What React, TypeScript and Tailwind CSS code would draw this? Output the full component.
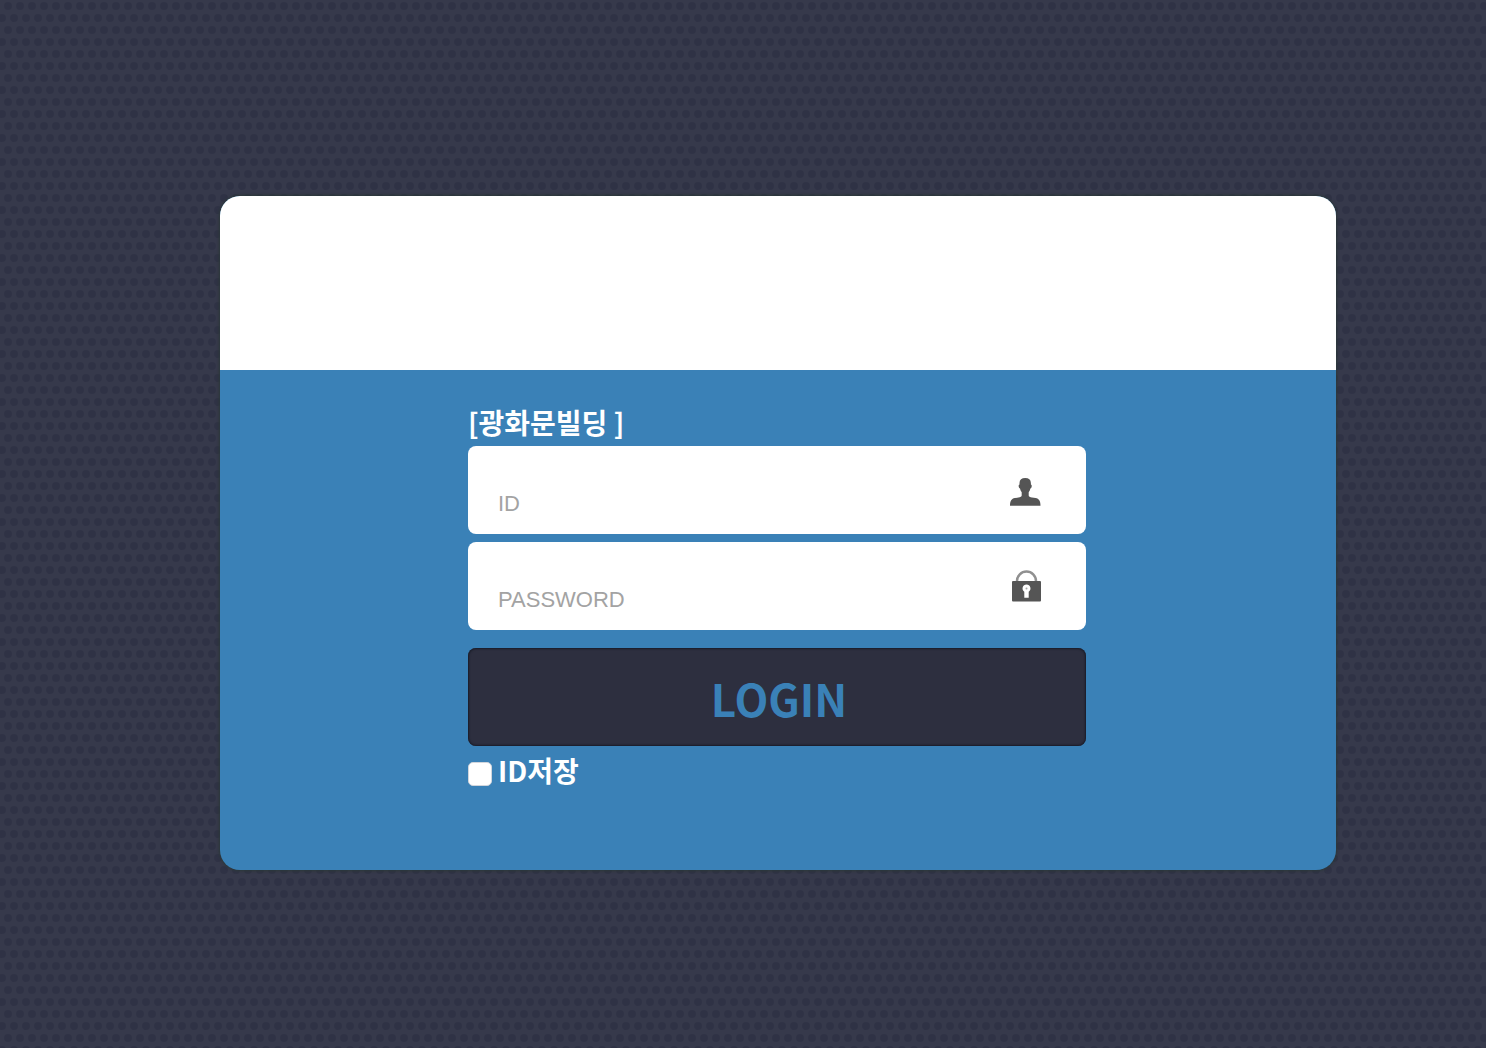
import { useState } from 'react'
import type { FormEvent, ReactNode } from 'react'

interface FieldProps {
  id: string
  type: string
  placeholder: string
  value: string
  onChange: (value: string) => void
  icon: ReactNode
}

function DotPattern() {
  return (
    <svg className="absolute inset-0 -z-10 h-full w-full" aria-hidden="true">
      <defs>
        <pattern id="dots" width="12" height="24" patternUnits="userSpaceOnUse">
          <rect width="12" height="24" fill="#36394b" />
          <g fill="#2f3245">
            <circle cx="8" cy="6" r="4" />
            <circle cx="2" cy="18" r="4" />
            <circle cx="14" cy="18" r="4" />
          </g>
        </pattern>
      </defs>
      <rect width="100%" height="100%" fill="url(#dots)" />
    </svg>
  )
}

function UserIcon() {
  return (
    <svg width="32" height="34" viewBox="0 0 32 34" fill="#555" aria-hidden="true">
      <path d="M15.200 4c-3.600 0-5.600 1.700-5.700 4.900v1.600c-.8.100-1 1.200-.7 2.400.2.900.6 1.500 1.200 1.700.3 1.500.8 2.700 1.700 3.700v3.200c0 1.100-1.300 1.800-3.300 2.100l-3.600.5C1.600 24.700 0 27 0 31.700h30.500c0-4.700-1.600-7-4.900-7.600l-3.600-.5c-2-.3-3.300-1-3.300-2.100v-3.200c.9-1 1.400-2.200 1.700-3.700.6-.2 1-.8 1.200-1.700.3-1.200.1-2.300-.7-2.400V8.900C20.800 5.700 18.800 4 15.200 4z" />
    </svg>
  )
}

function LockIcon() {
  return (
    <svg width="32" height="34" viewBox="0 0 32 34" aria-hidden="true">
      <path d="M7 12v-1a9.500 9.500 0 0 1 19 0v1" fill="none" stroke="#909090" strokeWidth="2.500" />
      <rect x="2" y="11" width="29" height="20.500" rx="1" fill="#555" />
      <path d="M16.500 14.500a4 4 0 0 0-2.200 7.300v6h4.400v-6a4 4 0 0 0-2.200-7.300z" fill="#fff" />
      <circle cx="16.500" cy="18.500" r="1" fill="#aaa" />
    </svg>
  )
}

function Field({ id, type, placeholder, value, onChange, icon }: FieldProps) {
  return (
    <label htmlFor={id} className="flex h-[88px] items-start rounded-lg bg-white pr-11 pl-[30px]">
      <input
        id={id}
        type={type}
        placeholder={placeholder}
        aria-label={placeholder}
        value={value}
        onChange={e => onChange(e.target.value)}
        className="h-full min-w-0 flex-1 bg-transparent pt-7 text-[22px] text-gray-700 outline-none placeholder:text-[#a3a3a3]"
      />
      <span className="flex w-8 justify-center pt-7">{icon}</span>
    </label>
  )
}

export default function App() {
  const [userId, setUserId] = useState('')
  const [password, setPassword] = useState('')
  const [saveId, setSaveId] = useState(false)

  const handleSubmit = (e: FormEvent) => {
    e.preventDefault()
  }

  return (
    <main className="relative isolate min-h-screen pt-[196px] pr-[150px] pb-10 pl-[220px] font-['Liberation_Sans','Noto_Sans_CJK_KR',sans-serif]">
      <DotPattern />
      <div className="overflow-hidden rounded-[20px] bg-[#3a81b7] shadow-[0_0_3px_1px_#2b3838]">
        <div className="h-[174px] bg-white" />
        <form onSubmit={handleSubmit} className="mx-auto w-[620px] max-w-full pt-8 pr-0.5 pb-20">
          <h1 className="h-11 font-['Noto_Sans_CJK_KR',sans-serif] text-[28px] leading-10 font-bold text-white">
            [광화문빌딩 ]
          </h1>
          <div className="flex flex-col gap-2">
            <Field id="user-id" type="text" placeholder="ID" value={userId} onChange={setUserId} icon={<UserIcon />} />
            <Field id="password" type="password" placeholder="PASSWORD" value={password} onChange={setPassword} icon={<LockIcon />} />
          </div>
          <button
            type="submit"
            className="mt-[18px] h-[98px] w-full rounded-lg bg-[#2d2f3f] pt-0.5 pl-1 font-['Noto_Sans_CJK_KR',sans-serif] text-[44px] font-bold text-[#3a81b7] shadow-[inset_0_0_2px_1px_#191b28]"
          >
            LOGIN
          </button>
          <div className="flex h-11 items-center gap-1.5">
            <input
              id="save-id"
              type="checkbox"
              checked={saveId}
              onChange={e => setSaveId(e.target.checked)}
              className="mt-3 size-6 appearance-none rounded-[5px] border border-gray-300 bg-white checked:bg-[#2d2f3f]"
            />
            <label htmlFor="save-id" className="pt-1 font-['Noto_Sans_CJK_KR',sans-serif] text-[28px] leading-10 font-bold text-white">
              ID저장
            </label>
          </div>
        </form>
      </div>
    </main>
  )
}
